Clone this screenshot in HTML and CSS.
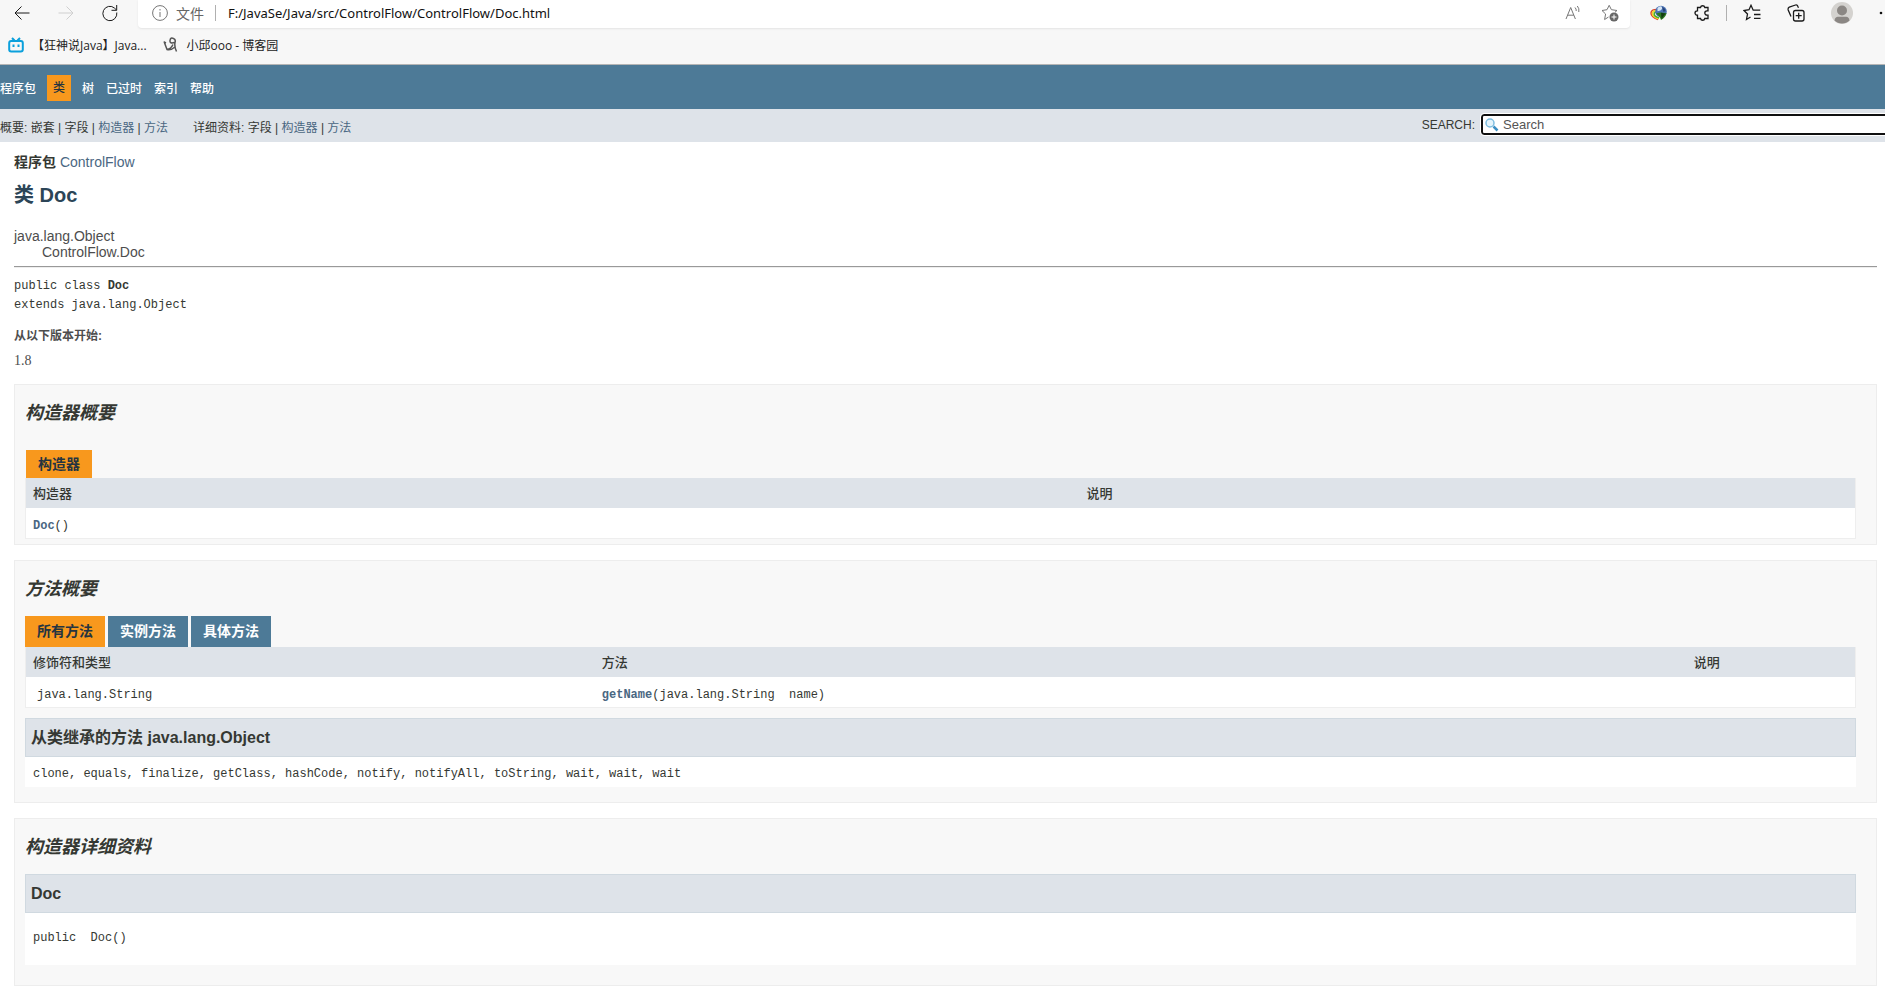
FILE: index.html
```html
<!DOCTYPE html>
<html lang="zh-CN">
<head>
<meta charset="utf-8">
<title>Doc</title>
<link rel="stylesheet" href="styles.css">
</head>
<body>
<header class="browser">
  <div class="toolbar">
    <div class="nav-buttons">
      <button class="icon-btn" type="button" aria-label="后退"><svg width="16" height="16" viewBox="0 0 16 16"><path d="M15.5 8H1M7.5 1.5L1 8l6.500 6.500"/></svg></button>
      <button class="icon-btn faded" type="button" aria-label="前进"><svg width="16" height="16" viewBox="0 0 16 16"><path d="M.5 8H15M8.500 1.500L15 8l-6.500 6.500"/></svg></button>
      <button class="icon-btn" type="button" aria-label="刷新"><svg width="16" height="18" viewBox="0 0 16 18"><path d="M14.800 8.500A7 7.200 0 1 1 12.600 4.200L14.500 6M14.700 1v5.300H9.500"/></svg></button>
    </div>
    <div class="address">
      <svg class="muted" width="16" height="16" viewBox="0 0 16 16"><circle cx="8" cy="8" r="7.400"/><path d="M8 7v5M8 4v1.500"/></svg>
      <span class="scheme">文件</span>
      <span class="divider"></span>
      <input class="url" type="text" aria-label="地址" value="F:/JavaSe/Java/src/ControlFlow/ControlFlow/Doc.html">
      <button class="icon-btn muted" type="button" aria-label="大声朗读"><svg width="16" height="16" viewBox="0 0 16 16"><path d="M1 14L5.700 2.500 10.400 14M2.600 10.200h6.200M10 2.500q1.500 1.500 1.200 3.500M12.300 1q2.300 2.500 1.500 6"/></svg></button>
      <button class="icon-btn muted" type="button" aria-label="收藏此页"><svg width="18" height="18" viewBox="0 0 18 18"><path d="M7.500 13L3.600 15.500l1-5.500L1 6.500l5-.8L8.200 1.300l2.200 4.400 5.600.8-2 1.700"/><circle class="solid" cx="13" cy="13" r="4.500"/><path class="white-line" d="M13 10.500v5M10.500 13h5"/></svg></button>
    </div>
    <div class="actions">
      <button class="icon-btn" type="button" aria-label="下载扩展"><svg class="globe" width="18" height="16" viewBox="0 0 18 16"><path d="M8 4.500Q1 4 1 8t7 6.500" stroke="#d8432a" stroke-width="1.500"/><path d="M8 6Q2.500 5 2.500 8.500T9 13.500" stroke="#f0d52c" stroke-width="1.800"/><path d="M8 7.500Q4.200 6.500 4.200 9t5 3.800" stroke="#47ad35" stroke-width="1.500"/><circle cx="11" cy="6.500" r="5.800" fill="#4a72b4"/><path d="M7.500 3q2-2.300 4-1.500l1 2-2 2-3 .8z" fill="#d4e4f4"/><path d="M12 2q3.500 1 3.500 4l-2 1z" fill="#29467c"/><path d="M6 8.500l4-1 6.500.5q-.5 4-5.500 7L9.800 12z" fill="#2d7a22"/><path d="M11 7.800l4.500.7-4 5.500z" fill="#143d12"/></svg></button>
      <button class="icon-btn" type="button" aria-label="扩展"><svg width="16" height="18" viewBox="0 0 16 18"><path class="bold-line" d="M4.500 3.500h2a2.200 2.200 0 0 1 4.300 0H14v3.300h-1a2.200 2.200 0 0 0 0 4.400h1v3.300h-3.200a2.200 2.200 0 0 1-4.300 0h-3v-3.300h-.3a2.200 2.200 0 0 1 0-4.400h.3V3.500z"/></svg></button>
      <span class="divider"></span>
      <button class="icon-btn" type="button" aria-label="收藏夹"><svg width="18" height="18" viewBox="0 0 18 18"><path class="bold-line" d="M7.500 13L3.500 15.500l1-5.500L1 6.500l5-.8L8 1.300l2.200 4.900h7M11 10.500h6.500M11 14.300h6.500"/></svg></button>
      <button class="icon-btn" type="button" aria-label="集锦"><svg width="18" height="18" viewBox="0 0 18 18"><rect class="bold-line" x="6.500" y="6.500" width="10.500" height="10.500" rx="2"/><path class="bold-line" d="M11.700 8.700v6M8.700 11.700h6M4 12.500L1.200 6Q.7 4 2.300 3.200L8.500 1q1.700-.5 2.300 1.200l.7 1.500"/></svg></button>
      <button class="icon-btn" type="button" aria-label="个人资料"><svg class="avatar" width="22" height="22" viewBox="0 0 22 22"><circle cx="11" cy="11" r="11" fill="#d4d2cf"/><circle cx="11" cy="8.500" r="5" fill="#8b8784"/><path d="M3.500 18.500Q4 14.800 7 14.800h8q3 0 3.500 3.700Q15.500 21.500 11 21.500t-7.500-3z" fill="#8b8784"/></svg></button>
      <button class="icon-btn more" type="button" aria-label="设置及其他"><svg width="16" height="4" viewBox="0 0 16 4"><g class="solid-black"><circle cx="2" cy="2" r="1.300"/><circle cx="8" cy="2" r="1.300"/><circle cx="14" cy="2" r="1.300"/></g></svg></button>
    </div>
  </div>
  <nav class="bookmarks" aria-label="收藏夹栏">
    <a href="#"><svg class="bili" width="16" height="16" viewBox="0 0 16 16"><path d="M4 1l2.500 2.500M12 1L9.500 3.500"/><rect x="1.200" y="4" width="13.600" height="10.500" rx="2"/><path d="M5.500 7.500v2.500M10.500 7.500v2.500"/></svg><span>【狂神说Java】Java...</span></a>
    <a href="#"><svg class="sketch" width="16" height="16" viewBox="0 0 16 16"><path d="M1 4.500q1.500 4 3 8Q8 12 10 7.500M11.500 5.500Q6.500 7 7 3.500T10.500 1.500q2.500 1 1.500 4-.8 4 1.500 9M1 5l2 1M4 12.500q4 1 8-2.500"/></svg><span>小邱ooo - 博客园</span></a>
  </nav>
</header>

<nav class="top-nav" aria-label="主导航">
  <a href="#">程序包</a>
  <span class="current">类</span>
  <a href="#">树</a>
  <a href="#">已过时</a>
  <a href="#">索引</a>
  <a href="#">帮助</a>
</nav>
<div class="sub-nav">
  <div class="sub-list">
    <div>概要: 嵌套 | 字段 | <a href="#constructors">构造器</a> | <a href="#methods">方法</a></div>
    <div>详细资料: 字段 | <a href="#detail">构造器</a> | <a href="#methods">方法</a></div>
  </div>
  <div class="search">
    <label for="search">SEARCH:</label>
    <div class="search-box">
      <svg width="14" height="14" viewBox="0 0 14 14"><circle cx="5" cy="5" r="4" fill="#e4f4fc" stroke="#7dbde0" stroke-width="1.500"/><path d="M8.500 8.500l4 4" stroke="#3c8fc4" stroke-width="2.500"/></svg>
      <input id="search" type="text" placeholder="Search">
    </div>
  </div>
</div>

<main class="content">
  <div class="package"><strong>程序包</strong> <a href="#">ControlFlow</a></div>
  <h1>类 Doc</h1>
  <div class="inheritance">java.lang.Object<div>ControlFlow.Doc</div></div>
  <hr>
  <pre class="signature">public class <b>Doc</b>
extends java.lang.Object</pre>
  <dl class="since"><dt>从以下版本开始:</dt><dd>1.8</dd></dl>

  <section class="panel constructors" id="constructors">
    <h2>构造器概要</h2>
    <div class="caption">构造器</div>
    <table class="c-table">
      <thead><tr><th class="c-name">构造器</th><th>说明</th></tr></thead>
      <tbody><tr><td><a href="#detail">Doc</a>()</td><td></td></tr></tbody>
    </table>
  </section>

  <section class="panel methods" id="methods">
    <h2>方法概要</h2>
    <div class="tabs">
      <button class="tab active" type="button">所有方法</button>
      <button class="tab" type="button">实例方法</button>
      <button class="tab" type="button">具体方法</button>
    </div>
    <table>
      <thead><tr><th class="m-type">修饰符和类型</th><th class="m-name">方法</th><th>说明</th></tr></thead>
      <tbody><tr><td class="type">java.lang.String</td><td><a href="#">getName</a>(java.lang.String&nbsp; name)</td><td></td></tr></tbody>
    </table>
    <h3>从类继承的方法 java.lang.Object</h3>
    <div class="code">clone, equals, finalize, getClass, hashCode, notify, notifyAll, toString, wait, wait, wait</div>
  </section>

  <section class="panel detail" id="detail">
    <h2>构造器详细资料</h2>
    <h3>Doc</h3>
    <div class="code">public&nbsp; Doc()</div>
  </section>
</main>
</body>
</html>
```
FILE: styles.css
```css
* { box-sizing: border-box; }
body {
  margin: 0;
  background: #fff;
  color: #353833;
  font-family: "Liberation Sans", "Noto Sans CJK SC", sans-serif;
  font-size: 14px;
  overflow-x: hidden;
}
a { color: #4a6782; text-decoration: none; }
button { border: 0; padding: 0; background: none; font: inherit; color: inherit; }
svg { display: block; flex: none; fill: none; stroke: currentColor; }

/* Browser toolbar */
.browser {
  height: 65px;
  overflow: hidden;
  background: #f7f7f7;
  border-bottom: 1px solid #b5b5b5;
  color: #1a1a1a;
  font-family: "Open Sans", "Noto Sans CJK SC", sans-serif;
}
.toolbar { display: flex; height: 28px; }
.nav-buttons { display: flex; align-items: center; gap: 28px; padding: 0 20px 2px 14px; }
.icon-btn { display: flex; align-items: center; justify-content: center; }
.faded { color: #cfcfcf; }
.muted { color: #767676; }
.solid { fill: #666; stroke: none; }
.white-line { stroke: #fff; }
.bold-line { stroke-width: 1.3; }
.solid-black { fill: #111; stroke: none; }
.globe, .avatar { stroke: none; }
.address {
  flex: 1;
  display: flex;
  align-items: center;
  padding: 0 11px 2px 14px;
  background: #fff;
  border-radius: 0 0 4px 4px;
  box-shadow: 0 1px 2px #e4e4e4;
}
.scheme { margin: 0 11px 0 8px; color: #666; }
.divider { width: 1px; height: 16px; background: #b0b0b0; }
.url {
  flex: 1;
  min-width: 0;
  margin-left: 12px;
  padding: 0;
  border: 0;
  background: none;
  color: #111;
  font: 13px "Noto Sans", "Noto Sans CJK SC", sans-serif;
}
.address .icon-btn { margin-left: 20px; }
.actions { display: flex; align-items: center; gap: 26px; padding: 0 0 2px 20px; margin-right: -10px; }
.actions .divider { margin: 0 -10px; }
.bookmarks { display: flex; align-items: center; gap: 16px; height: 34px; padding-left: 8px; font-size: 12px; }
.bookmarks a { display: flex; align-items: center; gap: 8px; color: #222; }
.bili { stroke: #0ba0dc; stroke-width: 2; }
.sketch { color: #555; stroke-width: 1.5; }

/* Documentation navigation */
.top-nav {
  display: flex;
  align-items: center;
  gap: 12px;
  height: 44px;
  padding-top: 1px;
  background: #4d7a97;
  font-size: 12px;
  font-weight: 500;
}
.top-nav a { color: #fff; }
.current { margin: 0 -1px; padding: 0 6px; line-height: 26px; background: #f8981d; color: #253441; }
.sub-nav {
  display: flex;
  align-items: center;
  justify-content: space-between;
  height: 33px;
  background: #dee3e9;
  font-size: 12px;
  overflow: hidden;
}
.sub-list { display: flex; gap: 25px; padding-top: 2px; }
.search { display: flex; align-items: center; gap: 6px; margin-right: -4px; padding-bottom: 2px; }
.search-box {
  display: flex;
  align-items: center;
  gap: 4px;
  width: 408px;
  height: 21px;
  padding-left: 2px;
  background: #fff;
  border: 2px solid #101010;
  border-radius: 3px;
  outline: 1px solid #fff;
}
.search-box input { flex: 1; min-width: 0; padding: 0; border: 0; outline: 0; background: none; font: 13px "Liberation Sans", sans-serif; }
.search-box input::placeholder { color: #555; }

/* Class description */
.content { padding: 10px 8px 4px 14px; }
.package { line-height: 20px; }
h1 { margin: 8px 0 0; font-size: 20px; line-height: 30px; color: #2c4557; }
.inheritance { margin-top: 18px; line-height: 16px; color: #4d4d4d; }
.inheritance div { padding-left: 28px; }
hr { margin: 6px 0 9px; border: 0; border-top: 1px solid #999; border-bottom: 1px solid #eee; }
pre { margin: 0; }
.signature, td, .code { font-family: "Liberation Mono", "Noto Sans CJK SC", monospace; font-size: 12px; }
.signature { line-height: 19px; }
.since { margin: 11px 0 13px; color: #4e4e4e; }
.since dt { font-size: 12px; font-weight: bold; line-height: 20px; }
.since dd { margin: 5px 0 0; font: 14px/20px "Liberation Serif", serif; }

/* Summary and detail panels */
.panel { margin-bottom: 15px; padding: 15px 20px 0 10px; border: 1px solid #ededed; background: #f8f8f8; }
h2 { margin: 0; font-size: 18px; line-height: 26px; font-style: italic; }
.constructors { padding-bottom: 5px; }
.methods { padding-bottom: 15px; }
.detail { padding-bottom: 20px; margin-bottom: 0; }
.caption { width: max-content; margin: 24px 0 0 1px; padding: 0 12px; background: #f8981d; color: #253441; font-weight: bold; line-height: 28px; }
.tabs { display: flex; gap: 3px; margin-top: 14px; }
.tab { padding: 0 12px; background: #4d7a97; color: #fff; font-weight: bold; line-height: 31px; }
.tab.active { background: #f8981d; color: #253441; }
table { width: 100%; table-layout: fixed; border-spacing: 0; border: 1px solid #eee; border-top: 0; background: #fff; }
th, td { height: 30px; padding: 2px 7px 0; text-align: left; line-height: 20px; }
th { background: #dee3e9; font-size: 13px; font-weight: 500; }
td { padding-top: 6px; }
td a { font-weight: bold; }
.type { padding-left: 11px; }
.c-name { width: 57.6%; }
.m-type { width: 31.1%; }
.m-name { width: 59.7%; }
h3 { margin: 10px 0 0; padding: 0 5px; border: 1px solid #d0d9e0; background: #dee3e9; font-size: 16px; line-height: 37px; }
.code { padding: 7px 8px 3px; background: #fff; line-height: 20px; }
.detail h3 { margin-top: 14px; }
.detail .code { padding: 15px 8px 17px; }
```
